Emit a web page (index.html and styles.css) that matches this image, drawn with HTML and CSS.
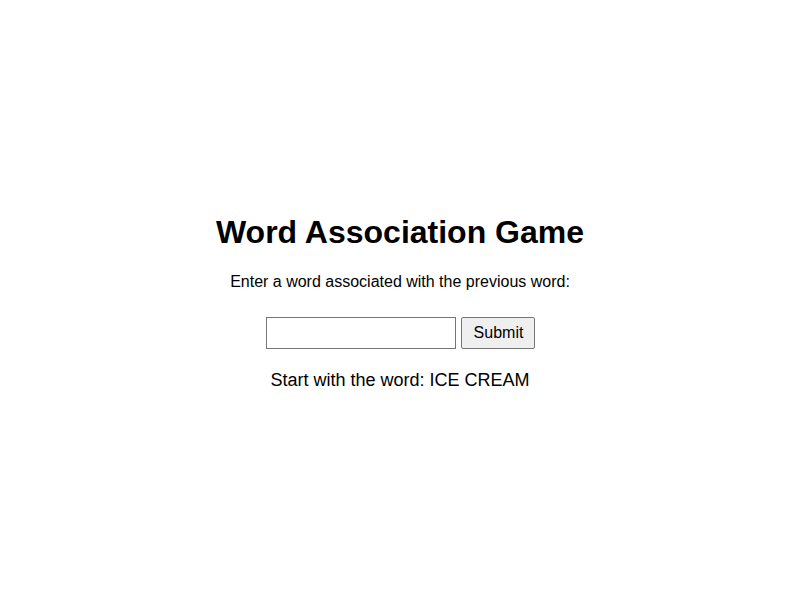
FILE: index.html
```html
<!DOCTYPE html>
<html>
<head>
<meta charset="utf-8">
<title>Word Association Game</title>
<link rel="stylesheet" href="styles.css">
</head>
<body>
<main class="game">
  <h1 class="title">Word Association Game</h1>
  <p class="prompt">Enter a word associated with the previous word:</p>
  <form class="entry">
    <input class="word-input" type="text">
    <button class="submit" type="button">Submit</button>
  </form>
  <p class="start">Start with the word: ICE CREAM</p>
</main>
</body>
</html>
```

FILE: styles.css
```css
html, body {
  margin: 0;
  padding: 0;
  background: #ffffff;
}
body {
  box-sizing: border-box;
  min-height: 100vh;
  padding-top: 5px;
  display: flex;
  align-items: center;
  justify-content: center;
  font-family: "Liberation Sans", Arial, sans-serif;
  color: #000;
}
.game {
  text-align: center;
}
.title {
  font-size: 32px;
  font-weight: bold;
  line-height: 37px;
  margin: 0 0 22px;
}
.prompt {
  font-size: 16px;
  line-height: 18px;
  margin: 0 0 26px;
}
.entry {
  display: flex;
  justify-content: center;
  gap: 5px;
  padding-left: 2px;
  margin: 0 0 21px;
}
.word-input {
  box-sizing: border-box;
  width: 190px;
  height: 32px;
  border: 1px solid #767676;
  border-radius: 0;
  padding: 2px 4px;
  font-size: 16px;
  font-family: "Liberation Sans", Arial, sans-serif;
  background: #fff;
  margin: 0;
}
.submit {
  box-sizing: border-box;
  width: 74px;
  height: 32px;
  border: 1px solid #767676;
  border-radius: 2px;
  background: #efefef;
  font-size: 16px;
  font-family: "Liberation Sans", Arial, sans-serif;
  color: #000;
  padding: 0;
  margin: 0;
}
.start {
  font-size: 18px;
  line-height: 21px;
  margin: 0;
}
```
